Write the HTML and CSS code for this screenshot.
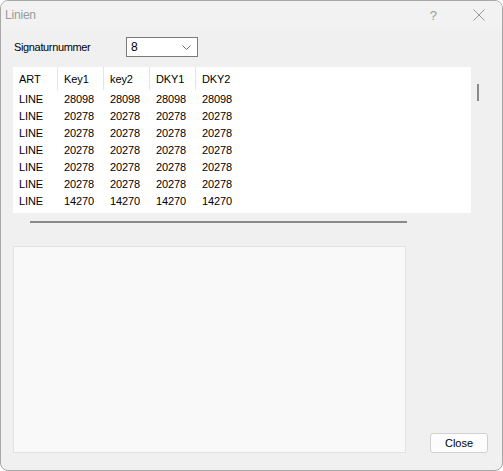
FILE: index.html
```html
<!DOCTYPE html>
<html>
<head>
<meta charset="utf-8">
<link rel="stylesheet" href="styles.css">
</head>
<body>
<div class="window">
  <div class="titlebar">
    <span class="title">Linien</span>
    <span class="help">?</span>
    <svg class="close-x" width="12" height="12" viewBox="0 0 12 12"><path d="M0.5 0.5 L11.5 11.5 M11.5 0.5 L0.5 11.5" stroke="#9a9a9a" stroke-width="1" fill="none"/></svg>
  </div>
  <div class="content">
    <div class="sig-row">
      <span class="label">Signaturnummer</span>
      <div class="combo">
        <span class="combo-value">8</span>
        <svg class="chev" width="9" height="5" viewBox="0 0 9 5"><path d="M0.5 0.5 L4.5 4.5 L8.5 0.5" stroke="#6a6a6a" stroke-width="1" fill="none"/></svg>
      </div>
    </div>
    <div class="table-row">
      <div class="grid">
        <div class="hcell">ART</div><div class="hcell">Key1</div><div class="hcell">key2</div><div class="hcell">DKY1</div><div class="hcell last">DKY2</div><div class="hfill"></div>
        <div class="cell">LINE</div><div class="cell">28098</div><div class="cell">28098</div><div class="cell">28098</div><div class="cell">28098</div><div></div>
        <div class="cell">LINE</div><div class="cell">20278</div><div class="cell">20278</div><div class="cell">20278</div><div class="cell">20278</div><div></div>
        <div class="cell">LINE</div><div class="cell">20278</div><div class="cell">20278</div><div class="cell">20278</div><div class="cell">20278</div><div></div>
        <div class="cell">LINE</div><div class="cell">20278</div><div class="cell">20278</div><div class="cell">20278</div><div class="cell">20278</div><div></div>
        <div class="cell">LINE</div><div class="cell">20278</div><div class="cell">20278</div><div class="cell">20278</div><div class="cell">20278</div><div></div>
        <div class="cell">LINE</div><div class="cell">20278</div><div class="cell">20278</div><div class="cell">20278</div><div class="cell">20278</div><div></div>
        <div class="cell">LINE</div><div class="cell">14270</div><div class="cell">14270</div><div class="cell">14270</div><div class="cell">14270</div><div></div>
      </div>
      <div class="vthumb"></div>
    </div>
    <div class="hscroll"></div>
    <div class="bottom-row">
      <div class="panel"></div>
      <button class="btn">Close</button>
    </div>
  </div>
</div>
</body>
</html>
```
FILE: styles.css
```css
html, body {
  margin: 0;
  padding: 0;
  background: #ffffff;
}
body {
  width: 503px;
  height: 471px;
  font-family: "Liberation Sans", Arial, sans-serif;
  font-size: 11px;
  color: #000;
}
.window {
  box-sizing: border-box;
  width: 503px;
  height: 471px;
  border: 1px solid #a8a8a8;
  border-radius: 8px;
  background: #f0f0f0;
  display: flex;
  flex-direction: column;
  overflow: hidden;
}
.titlebar {
  height: 28px;
  display: flex;
  align-items: center;
  padding-left: 4px;
  background: #f2f2f2;
}
.title {
  flex: 1;
  color: #9a9a9a;
  font-size: 12px;
  letter-spacing: -0.2px;
}
.help {
  color: #9a9a9a;
  font-size: 13px;
  margin-right: 36px;
}
.close-x {
  margin-right: 17px;
}
.content {
  display: flex;
  flex-direction: column;
  padding-left: 12px;
}
.sig-row {
  display: flex;
  align-items: center;
  margin-top: 8px;
  height: 20px;
}
.label {
  width: 112px;
  padding-left: 1px;
  letter-spacing: -0.35px;
}
.combo {
  box-sizing: border-box;
  width: 72px;
  height: 20px;
  border: 1px solid #7a7a7a;
  background: #fff;
  display: flex;
  align-items: center;
  padding-left: 4px;
  padding-right: 6px;
}
.combo-value {
  flex: 1;
  font-size: 12px;
}
.table-row {
  display: flex;
  margin-top: 10px;
}
.grid {
  width: 458px;
  height: 146px;
  background: #fff;
  display: grid;
  grid-template-columns: 45px 46px 46px 46px 46px 1fr;
  grid-template-rows: 23px repeat(7, 17px);
  align-content: start;
}
.hcell {
  display: flex;
  align-items: center;
  padding-left: 6px;
  border-right: 1px solid #e5e5e5;
  letter-spacing: -0.1px;
}
.hcell.last {
  border-right: none;
}
.cell {
  display: flex;
  align-items: center;
  padding-left: 6px;
  letter-spacing: -0.1px;
}
.vthumb {
  width: 2px;
  height: 17px;
  background: #8a8a8a;
  margin-left: 6px;
  margin-top: 17px;
}
.hscroll {
  width: 377px;
  height: 2px;
  background: #8a8a8a;
  margin-left: 17px;
  margin-top: 8px;
}
.bottom-row {
  display: flex;
  align-items: flex-end;
  margin-top: 23px;
}
.panel {
  box-sizing: border-box;
  width: 393px;
  height: 207px;
  background: #f9f9f9;
  border: 1px solid #e2e2e2;
}
.btn {
  box-sizing: border-box;
  width: 58px;
  height: 20px;
  margin-left: 24px;
  margin-bottom: 0;
  background: #fdfdfd;
  border: 1px solid #d0d0d0;
  border-radius: 3px;
  font-family: "Liberation Sans", Arial, sans-serif;
  font-size: 11px;
  color: #000;
  padding: 0;
}
```
